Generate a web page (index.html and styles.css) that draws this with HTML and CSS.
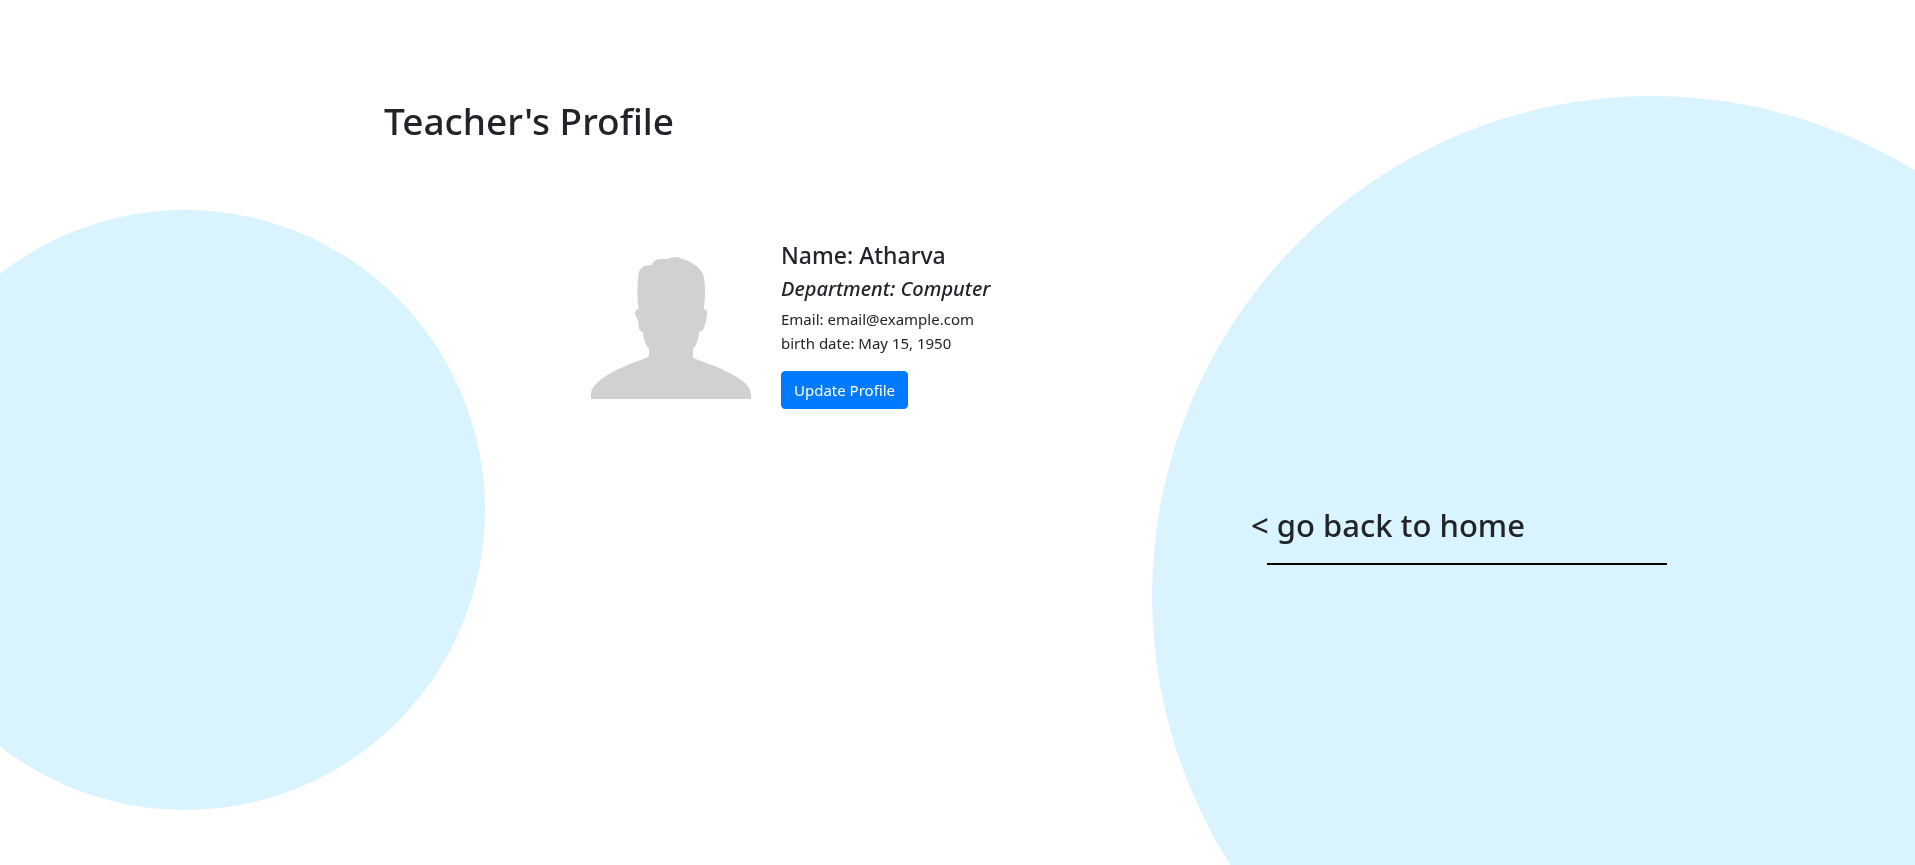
FILE: index.html
```html
<!DOCTYPE html>
<html lang="en">
<head>
<meta charset="utf-8">
<title>Teacher's Profile</title>
<link rel="stylesheet" href="styles.css">
</head>
<body>
<div class="backdrop" aria-hidden="true">
  <span class="circle circle-small"></span>
  <span class="circle circle-large"></span>
</div>
<main class="page">
  <h1 class="title">Teacher's Profile</h1>
  <section class="profile">
    <svg class="avatar" viewBox="0 0 160 142" role="img" aria-label="Profile picture">
      <path fill="#d0d1d3" d="M0 142V137C0 133 2 130 6 126C14 118 27 112 39 107L55 101Q58 100 58 98V92Q55 89 54 85Q52 80 52 75Q48 74 48 71L47 63L44 57Q44 52 48 52C46 45 46 24 48 15Q50 10 54 9Q57 8 61 8Q62 4 65 3Q70 1 76 2Q81 0 85 0Q89 0 91 2Q97 3 101 6Q109 11 112 17C115 26 114 42 113 52Q117 53 116 56L115 64L113 71Q112 74 108 75Q108 80 106 85Q105 89 102 92V101L126 110C137 115 146 119 154 126C159 131 160 134 160 138V142Z"/>
    </svg>
    <div class="details">
      <h2 class="name">Name: Atharva</h2>
      <h3 class="department">Department: Computer</h3>
      <p class="info">Email: email@example.com</p>
      <p class="info">birth date: May 15, 1950</p>
      <button class="update" type="button">Update Profile</button>
    </div>
  </section>
  <nav class="back">
    <a class="back-link" href="#">&lt; go back to home</a>
    <hr class="rule">
  </nav>
</main>
</body>
</html>
```

FILE: styles.css
```css
* {
  box-sizing: border-box;
}

body {
  margin: 0;
  min-height: 100vh;
  background: #fff;
  color: #212529;
  font-family: "Segoe UI", "Noto Sans", "Open Sans", sans-serif;
  font-size: 15px;
  line-height: 24px;
}

h1, h2, h3, p {
  margin: 0;
}

.backdrop {
  position: fixed;
  inset: 0;
  z-index: -1;
  overflow: hidden;
}

.circle {
  position: absolute;
  border-radius: 50%;
  background: #d9f3ff;
}

.circle-small {
  top: 210px;
  left: -115px;
  width: 600px;
  height: 600px;
}

.circle-large {
  top: 96px;
  right: -237px;
  width: 1000px;
  height: 1000px;
}

.page {
  padding: 97px 0 0 20%;
}

.title {
  padding-left: 1px;
  font-size: 37px;
  font-weight: 500;
  line-height: 48px;
}

.profile {
  display: flex;
  gap: 30px;
  margin: 96px 0 0 208px;
}

.avatar {
  flex: none;
  width: 160px;
  height: 142px;
  margin-top: 16px;
}

.name {
  margin-bottom: 8px;
  font-size: 23px;
  font-weight: 500;
  line-height: 28px;
}

.department {
  margin-bottom: 6px;
  font-size: 20px;
  font-style: italic;
  font-weight: 500;
  line-height: 24px;
}

.info {
  font-weight: 400;
}

.update {
  margin-top: 16px;
  padding: 6px 12px;
  border: 1px solid #007bff;
  border-radius: 4px;
  background: #007bff;
  color: #fff;
  font: inherit;
}

.back {
  width: 416px;
  margin: 97px 0 0 868px;
}

.back-link {
  display: block;
  color: inherit;
  font-size: 31px;
  font-weight: 500;
  line-height: 38px;
  text-decoration: none;
}

.rule {
  width: 400px;
  height: 2px;
  margin: 19px 0 0 auto;
  border: 0;
  background: #000;
}
```
